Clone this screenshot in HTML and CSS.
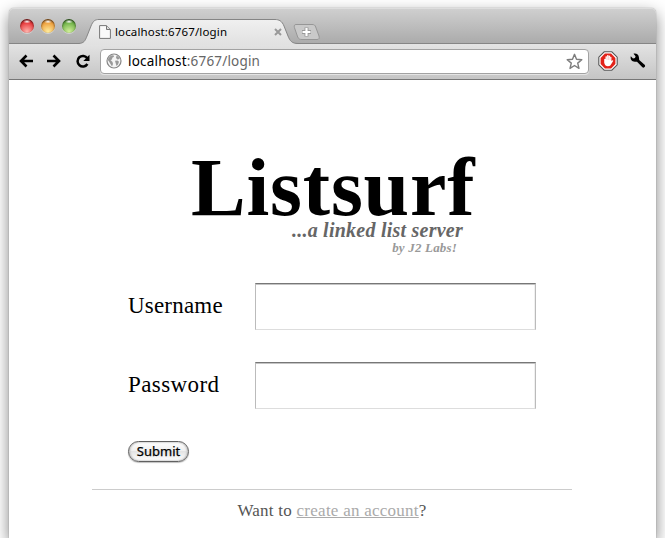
FILE: index.html
```html
<!DOCTYPE html>
<html lang="en">
<head>
<meta charset="utf-8">
<title>Listsurf</title>
<link rel="stylesheet" href="styles.css">
</head>
<body>
<div class="window">
  <header class="tabstrip">
    <div class="lights"><i class="light red"></i><i class="light amber"></i><i class="light green"></i></div>
    <div class="tab">
      <svg class="tab-shape" width="222" height="26" viewBox="0 0 222 26">
        <defs>
          <linearGradient id="tabfill" x1="0" y1="0" x2="0" y2="1"><stop offset="0" stop-color="#f0f0f0"/><stop offset="1" stop-color="#e1e1e1"/></linearGradient>
        </defs>
        <path d="M0 24.5C5 24 6 22 8 17L12 7C14 2 16 .5 20 .5H196C200 .5 203 2 205 7L209 17C211 22 213 24.500 219 24.500L222 24.500V26H0Z" fill="url(#tabfill)"/>
        <path d="M0 24.500C5 24 6 22 8 17L12 7C14 2 16 .5 20 .5H196C200 .5 203 2 205 7L209 17C211 22 213 24.500 219 24.500H222" fill="none" stroke="#858585"/>
      </svg>
      <svg class="doc" width="12" height="14" viewBox="0 0 12 14"><path d="M.6.6H7.500L11.400 4.500V13.400H.6Z" fill="#fafafa" stroke="#777"/><path d="M7.500.8V4.500H11.200" fill="#ddd" stroke="#777"/></svg>
      <span class="tab-title">localhost:6767/login</span>
      <svg class="close" width="8" height="8" viewBox="0 0 8 8"><path d="M1 1L7 7M7 1L1 7" stroke="#999" stroke-width="2"/></svg>
    </div>
    <svg class="newtab" width="27" height="18" viewBox="0 0 27 18">
      <path d="M3 1.500H19C21 1.500 22 2 22.700 4L26 13C26.600 15 26 16.500 24 16.500H9C7 16.500 5.500 16 4.700 14L1.400 4.500C.9 2.500 1.500 1.500 3 1.500Z" fill="#c9c9c9" stroke="#969696"/>
      <path d="M13.500 4.500V13.500M9 9H18" stroke="#999" stroke-width="4"/><path d="M13.500 5V13M9.500 9H17.500" stroke="#fff" stroke-width="2.200"/>
    </svg>
  </header>
  <nav class="toolbar">
    <svg class="arrow" width="14" height="14" viewBox="0 0 14 14"><path d="M7.500 1.500L2 7L7.500 12.500M2 7H14" fill="none" stroke="#000" stroke-width="2.600"/></svg>
    <svg class="arrow" width="14" height="14" viewBox="0 0 14 14"><path d="M6.500 1.500L12 7L6.500 12.500M12 7H0" fill="none" stroke="#000" stroke-width="2.600"/></svg>
    <svg class="reload" width="15" height="15" viewBox="0 0 15 15"><path d="M12.300 4.300A5.300 5.300 0 1 0 12.400 10" fill="none" stroke="#000" stroke-width="2.500"/><path d="M14.500.8V7H8.300Z"/></svg>
    <div class="address">
      <svg width="16" height="16" viewBox="0 0 16 16"><circle cx="8" cy="8" r="7" fill="#f4f4f4" stroke="#868686" stroke-width="1.200"/><path d="M2.500 5L5 2.500L7.500 2.200L8 3.800L6.300 4.800L6 6.500L4.500 7L6.500 9L7 11L6 13.500L4.500 11L3 8.500L1.800 7ZM10.500 2.500L12.500 3.800L13.800 6L11.500 6.500L10 5ZM9 7.800L11.500 7.500L13 8.800L12 11.500L10.500 13L9.800 10.500Z" fill="#999"/></svg>
      <span class="url">localhost<span>:6767/login</span></span>
      <svg class="star" width="17" height="17" viewBox="0 0 17 17"><path d="M8.500 1.300L10.500 6.300L15.800 6.700L11.700 10.100L13 15.400L8.500 12.500L4 15.400L5.300 10.100L1.200 6.700L6.500 6.300Z" fill="#fff" stroke="#7d7d7d" stroke-width="1.400" stroke-linejoin="round"/></svg>
    </div>
    <svg class="block" width="20" height="20" viewBox="0 0 20 20"><path d="M6.200.8H13.800L19.200 6.200V13.800L13.800 19.200H6.200L.8 13.800V6.200Z" fill="#fff" stroke="#555" stroke-width="1.100"/><path d="M6.900 2.600H13.100L17.400 6.900V13.100L13.100 17.400H6.900L2.600 13.100V6.900Z" fill="#e2231a"/><path d="M6.200 8.200V11.800Q7 15.300 10 15.300Q12.500 15.300 13.300 13L15.300 9.800Q14.600 8.800 13.400 10V6Q12.600 5.300 12.100 6V5Q11.200 4.200 10.600 5V4.500Q9.700 3.700 9 4.600V5.500Q8.200 4.800 7.500 5.600V8Q6.700 7.500 6.200 8.200Z" fill="#fff"/><path d="M9 5V9M10.600 5V9M12.100 6V9" stroke="#ee8b86" stroke-width=".4"/></svg>
    <svg class="wrench" width="16" height="16" viewBox="0 0 16 16"><path d="M3.500.8L5.600 3.200L5 5L3 5.400L.8 3.300C0 6.300 1.800 8.900 5.300 8.700L7 8.700L12.400 14.200C13.600 15.500 15.800 13.900 14.900 12.100L9.200 6.900L9 4.700C8.700 1.500 6.200 0 3.500.8Z"/></svg>
  </nav>
  <main class="page">
    <h1 class="logo">Listsurf</h1>
    <p class="tagline">...a linked list server</p>
    <p class="byline">by J2 Labs!</p>
    <form class="login">
      <label class="field"><span class="name user">Username</span><input type="text"></label>
      <label class="field"><span class="name pass">Password</span><input type="password"></label>
      <button type="button">Submit</button>
    </form>
    <p class="signup">Want to <a href="#">create an account</a>?</p>
  </main>
</div>
</body>
</html>
```
FILE: styles.css
```css
* { box-sizing: border-box; }
body {
  margin: 0;
  height: 538px;
  overflow: hidden;
  padding: 8px 9px 0;
  background: #fff;
  font-family: "Liberation Serif", serif;
}
p, h1 { margin: 0; }
svg { display: block; flex: none; }
.window {
  width: 647px;
  height: 530px;
  background: #fff;
  border-radius: 5px 5px 0 0;
  box-shadow: 0 0 1px rgba(0,0,0,.5), 0 6px 16px rgba(0,0,0,.5);
}
.tabstrip {
  display: flex;
  height: 36px;
  padding-left: 11px;
  border-radius: 5px 5px 0 0;
  background: linear-gradient(#d0d0d0, #aaa);
  box-shadow: inset 0 1px #ddd, inset 0 -1px #858585;
}
.lights { display: flex; gap: 7px; padding-top: 11px; width: 59px; }
.light {
  width: 14px;
  height: 14px;
  border-radius: 50%;
  box-shadow: 0 1px rgba(255,255,255,.4), inset 0 1px 2px rgba(0,0,0,.65);
}
.red { background: radial-gradient(ellipse 4px 2px at 50% 18%, #fff, transparent), radial-gradient(circle at 50% 90%, #ffb5ae, #e7383a 65%, #a42828); }
.amber { background: radial-gradient(ellipse 4px 2px at 50% 18%, #fff, transparent), radial-gradient(circle at 50% 90%, #ffed9e, #ee9f3c 65%, #a76222); }
.green { background: radial-gradient(ellipse 4px 2px at 50% 18%, #fff, transparent), radial-gradient(circle at 50% 90%, #d4f09b, #6fb248 65%, #3c7429); }
.tab {
  position: relative;
  display: flex;
  align-items: center;
  width: 222px;
  height: 26px;
  margin-top: 11px;
  padding: 0 19px 0 20px;
}
.tab-shape { position: absolute; left: 0; top: 0; }
.doc, .close, .tab-title { position: relative; }
.tab-title {
  flex: 1;
  margin-left: 4px;
  font: 11.5px/16px "Noto Sans", sans-serif;
  letter-spacing: .14px;
  white-space: nowrap;
}
.newtab { margin: 15px 0 0 -8px; }
.toolbar {
  display: flex;
  align-items: center;
  height: 36px;
  padding: 0 10px 1px;
  background: linear-gradient(#e3e3e3, #c5c5c5);
  border-bottom: 1px solid #777;
}
.arrow { margin-right: 14px; }
.address {
  display: flex;
  align-items: center;
  width: 489px;
  height: 25px;
  margin-left: 10px;
  padding: 0 5px;
  background: #fff;
  border: 1px solid #a2a2a2;
  border-radius: 4px;
  box-shadow: 0 1px rgba(255,255,255,.5);
}
.url {
  flex: 1;
  margin-left: 6px;
  font: 13.500px/20px "Noto Sans", sans-serif;
  letter-spacing: .19px;
}
.url span { color: #666; }
.block { margin-left: 9px; }
.wrench { margin-left: 12px; }
.page {
  width: 480px;
  margin: 0 auto 0 83px;
  padding-top: 71px;
}
.logo {
  padding-left: 99px;
  font-size: 82px;
  line-height: 74px;
  height: 68px;
  letter-spacing: .8px;
}
.tagline {
  padding-right: 109px;
  font: italic bold 20px/22px "Liberation Serif", serif;
  letter-spacing: .24px;
  text-align: right;
  color: #666;
}
.byline {
  padding-right: 115px;
  font: italic bold 13px/14px "Liberation Serif", serif;
  letter-spacing: .18px;
  text-align: right;
  color: #999;
}
.login {
  padding: 28px 36px 27px;
  border-bottom: 1px solid #ccc;
}
.field { display: flex; height: 79px; }
.name {
  width: 127px;
  font-size: 23px;
  line-height: 45px;
}
.user { letter-spacing: .2px; }
.pass { letter-spacing: .4px; }
input {
  width: 281px;
  height: 47px;
  padding: 0;
  border: 1px solid #bbb;
  border-top-color: #777;
  border-bottom-color: #ddd;
  background: #fff;
  box-shadow: inset 0 1px #c4c4c4, inset -1px 0 #f0f0f0;
}
button {
  display: block;
  width: 61px;
  height: 21px;
  padding: 0;
  border: 1px solid #606060;
  border-radius: 11px;
  background: linear-gradient(#fff, #f0f0f0 45%, #e4e4e4 50%, #fff);
  box-shadow: 0 1px 1px rgba(0,0,0,.25), inset 1px 0 2px #bbb, inset -1px 0 2px #bbb;
  font: 13px/17px "Noto Sans", sans-serif;
  -webkit-text-stroke: .25px #000;
  color: #000;
}
.signup {
  padding-top: 10px;
  font-size: 17px;
  line-height: 22px;
  letter-spacing: .25px;
  text-align: center;
  color: #555;
}
.signup a { color: #aaa; }
```
